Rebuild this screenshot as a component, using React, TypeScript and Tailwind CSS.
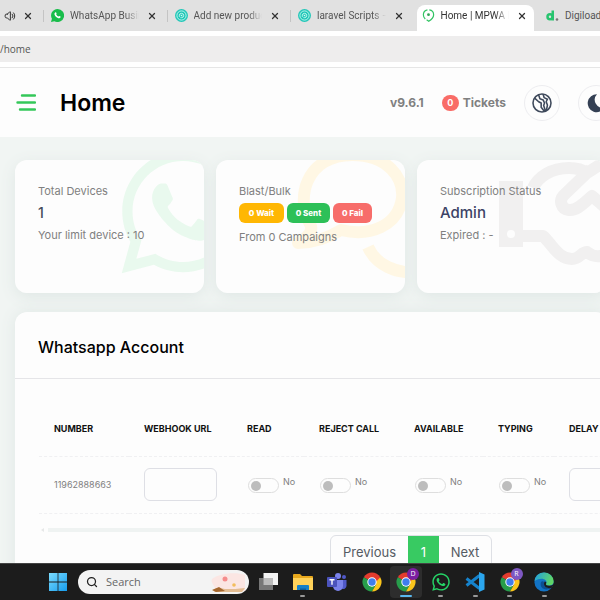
import React from 'react';
import { FaWhatsapp } from 'react-icons/fa';
import { FiSearch, FiX } from 'react-icons/fi';
import { HiOutlineSpeakerWave } from 'react-icons/hi2';

interface BrowserTab {
    title: string;
    icon: React.ReactNode;
    active?: boolean;
}

interface DeviceSwitch {
    id: string;
    label: string;
}

const WhatsappBadge = () => (
    <svg viewBox="0 0 24 24" className="size-[13px] shrink-0">
        <path d="M12 0a12 12 0 0 0-10.3 18L0 24l6.2-1.6A12 12 0 1 0 12 0Z" fill="#19bd4b" />
        <path d="M8.2 6.2c.6-.3 1-.2 1.3.4l.8 1.8c.2.5-.8 1.3-.6 1.7.9 1.7 2.2 2.9 4 3.7.5.2 1.3-1.2 1.8-1l1.9.9c.5.3.5.8.2 1.4-.7 1.5-2.4 2.3-4.2 1.8-3.4-1-5.9-3.5-6.9-6.7-.4-1.5.3-3.2 1.7-4Z" fill="#fff" />
    </svg>
);

const SpiralBadge = () => (
    <svg viewBox="0 0 24 24" className="size-[13px] shrink-0" fill="none">
        <circle cx="12" cy="12" r="12" fill="#22c7b8" />
        <circle cx="12" cy="12" r="8.5" stroke="#d6fbf5" strokeWidth="1.5" />
        <path d="M8 14.5V12a4 4 0 1 1 4 4h-2" stroke="#d6fbf5" strokeWidth="1.6" />
        <circle cx="12" cy="12" r="1.5" fill="#d6fbf5" />
    </svg>
);

const PinBadge = () => (
    <svg viewBox="0 0 24 24" className="size-[13px] shrink-0" fill="none" stroke="#32c463" strokeWidth="2.2">
        <path d="M6 18.5C3.500 16 2.500 13.500 2.500 10.500A9.300 9.300 0 0 1 10 1.500M13.500 1.500a9.300 9.300 0 0 1 8 9c0 5-4 9-9 12l-4-2.500" />
        <circle cx="12" cy="10.5" r="2.6" fill="#32a455" stroke="none" />
    </svg>
);

const DigiBadge = () => (
    <svg viewBox="0 0 26 24" className="size-[13px] shrink-0">
        <circle cx="8" cy="14.5" r="5" fill="none" stroke="#27c46f" strokeWidth="5" />
        <path d="M11 2h5v20h-5z" fill="#27c46f" />
        <circle cx="22" cy="20" r="2.6" fill="#777" />
    </svg>
);

const MenuIcon = () => (
    <svg viewBox="0 0 20 18" className="h-[18px] w-5" stroke="#34c759" strokeWidth="2.4" strokeLinecap="round">
        <path d="M6 1.500H19M1.500 8.500H19M4 15.500h15" />
    </svg>
);

const GlobeIcon = () => (
    <svg viewBox="0 0 24 24" className="size-5" fill="none" stroke="#3f4a5c" strokeWidth="1.9" strokeLinejoin="round" strokeLinecap="round">
        <circle cx="12" cy="12" r="10.8" />
        <path d="M3.500 6.500 8 10.500l3 1.500v5l3.500 4.500M8 2.500l1.500 4.500 4 1.500 1.500 3.500-1 3 2 6M13.500 2l1 3.500 4 2-1.500 3 1.500 4-1 5.500" />
    </svg>
);

const MoonIcon = () => (
    <svg viewBox="0 0 20 20" className="size-5">
        <path d="M11 1.2A9 9 0 1 0 18.600 14.500 8 8 0 0 1 11 1.200Z" fill="#344054" />
    </svg>
);

const BubblesMark = () => (
    <svg viewBox="0 0 140 140" className="size-[140px]" fill="none" stroke="currentColor" strokeWidth="12">
        <path d="M22 64C8 40 16-4 64-5c36 0 52 23 50 43-4 28-32 39-61 32-13 8-29 13-43 13 10-6 16-12 12-19Z" strokeLinejoin="round" />
        <path d="M80 87c8 18 28 27 50 25" />
    </svg>
);

const HandshakeMark = () => (
    <svg viewBox="0 0 130 120" className="h-[120px] w-[130px]" fill="none">
        <path fillRule="evenodd" d="M0 26h24v66H0V26Zm12 49a4 4 0 1 0 0 8 4 4 0 0 0 0-8Z" fill="currentColor" />
        <path
            d="M24 81h20c9 8 15 23 29 23 8 0 9-7 15-7 8 7 20 5 26-4M34 33c5-11 18-20 36-20 8 0 14 2 18 5l11-7h30M92 14 66 39c-7 6-4 15 4 16 8 1 15-7 23-14l37 32"
            stroke="currentColor"
            strokeWidth="12"
            strokeLinejoin="round"
        />
    </svg>
);

const WindowsIcon = () => (
    <svg viewBox="0 0 20 20" className="size-5">
        <defs>
            <linearGradient id="win" x1="0" y1="0" x2="1" y2="1">
                <stop offset="0" stopColor="#7bdcff" />
                <stop offset="1" stopColor="#169ced" />
            </linearGradient>
        </defs>
        <path d="M1 1h8.600v8.600H1zM10.400 1H19v8.600h-8.600zM1 10.400h8.600V19H1zM10.400 10.400H19V19h-8.600z" fill="url(#win)" />
    </svg>
);

const TaskViewIcon = () => (
    <svg viewBox="0 0 20 20" className="size-5">
        <path d="M5.500 1H20v12H5.500z" fill="#f3f3f3" />
        <path d="M1 6h14v12H1z" fill="#777" />
        <path d="M5.500 6H15v7H5.500z" fill="#bbb" />
    </svg>
);

const FolderIcon = () => (
    <svg viewBox="0 0 20 20" className="size-5">
        <path d="M0 3a1 1 0 0 1 1-1h6l2 2h10a1 1 0 0 1 1 1v5H0z" fill="#e9a91d" />
        <path d="M0 6h20v12H0z" fill="#ffd25a" />
        <path d="M4 18v-4a1 1 0 0 1 1-1h10a1 1 0 0 1 1 1v4z" fill="#1580c9" />
        <path d="M7 18v-1.500h6V18z" fill="#0c5d9c" />
    </svg>
);

const TeamsIcon = () => (
    <svg viewBox="0 0 20 20" className="size-5">
        <circle cx="11" cy="4" r="3" fill="#7b83eb" />
        <circle cx="17" cy="5" r="2" fill="#5059c9" />
        <path d="M13 8h6.500v6a3.300 3.300 0 0 1-5 2.500z" fill="#5059c9" />
        <path d="M6 8h10v6a5 5 0 0 1-10 0z" fill="#7b83eb" />
        <rect y="5" width="10" height="10" rx="1" fill="#4b53bc" />
        <path d="M2.500 7.800h5M5 7.800v5" stroke="#fff" strokeWidth="1.4" />
    </svg>
);

const ChromeIcon = () => (
    <svg viewBox="0 0 20 20" className="size-5">
        <path d="M10 10 1.800 5.200a9.500 9.500 0 0 1 16.400 0z" fill="#e33b2e" />
        <path d="M10 10 1.800 5.200A9.500 9.500 0 0 0 10 19.500l4-7z" fill="#279d4b" />
        <path d="m10 10 8.200-4.800A9.500 9.500 0 0 1 10 19.500l4.200-7.200z" fill="#fbc51b" />
        <path d="M10 5.200h8.200L14 10z" fill="#e33b2e" />
        <circle cx="10" cy="10" r="4.7" fill="#fff" />
        <circle cx="10" cy="10" r="3.7" fill="#3f7ded" />
    </svg>
);

const CodeIcon = () => (
    <svg viewBox="0 0 20 20" className="size-5" fill="none">
        <path d="m1.500 6.500 13 10M1.500 13.500l13-10" stroke="#1683cc" strokeWidth="3" />
        <path d="m14 0 5.500 2.500v15L14 20z" fill="#2ba6ee" />
    </svg>
);

const EdgeIcon = () => (
    <svg viewBox="0 0 20 20" className="size-5">
        <defs>
            <linearGradient id="edge" x1="0" y1="0" x2="1" y2="0.3">
                <stop offset="0" stopColor="#1f9ee4" />
                <stop offset="1" stopColor="#5fd669" />
            </linearGradient>
        </defs>
        <circle cx="10" cy="10" r="9.6" fill="#1273c5" />
        <path d="M.5 9A9.600 9.600 0 0 1 19.600 9c.2 4-3 5-6 4.500-2-.3-2-1.500-1.200-2.500C13.500 8 8 4 .5 9Z" fill="url(#edge)" />
        <path d="M7 10c-2 6 4 9.500 10.500 6-4 .5-8-1-7.500-5 .2-2-2-2.500-3-1Z" fill="#0c4f92" />
        <path d="M10.500 9.500c2 0 2 1.500 1.500 2.300-.5 1.200 1 2 3.500 1.900 2 0 3-.5 4-1.700-.5 2-1 3-2 4-4 .8-7.700-1-7.500-4.500z" fill="#1c1c1c" />
    </svg>
);

const tabs: BrowserTab[] = [
    { title: 'WhatsApp Busin', icon: <WhatsappBadge /> },
    { title: 'Add new produc', icon: <SpiralBadge /> },
    { title: 'laravel Scripts – C', icon: <SpiralBadge /> },
    { title: 'Home | MPWA M', icon: <PinBadge />, active: true },
];

const switches: DeviceSwitch[] = [
    { id: 'read', label: 'Read' },
    { id: 'reject', label: 'Reject call' },
    { id: 'available', label: 'Available' },
    { id: 'typing', label: 'Typing' },
];

const taskbarApps = [
    { name: 'Task view', icon: <TaskViewIcon /> },
    { name: 'Files', icon: <FolderIcon />, open: true },
    { name: 'Teams', icon: <TeamsIcon /> },
    { name: 'Chrome', icon: <ChromeIcon /> },
    { name: 'Chrome D', icon: <ChromeIcon />, badge: 'D', active: true },
    { name: 'WhatsApp', icon: <FaWhatsapp className="size-5 text-[#25d366]" />, open: true },
    { name: 'Code', icon: <CodeIcon />, open: true },
    { name: 'Chrome R', icon: <ChromeIcon />, badge: 'R', open: true },
    { name: 'Edge', icon: <EdgeIcon />, open: true },
];

const BrowserBar = () => (
    <div className="shrink-0 font-[Roboto,sans-serif] text-[10px] text-[#555]">
        <div className="flex h-[31px] bg-[#e1e1e1]">
            <div className="flex w-[43px] shrink-0 items-center gap-[7px] pl-1">
                <HiOutlineSpeakerWave className="size-3 text-[#333]" strokeWidth={2} />
                <button aria-label="Close tab"><FiX className="size-[10px] text-[#333]" strokeWidth={3} /></button>
            </div>
            {tabs.map((tab) => (
                <div key={tab.title} className={`relative flex min-w-0 flex-1 items-center pl-2 ${tab.active ? 'text-[#333]' : ''}`}>
                    {tab.active
                        ? <div className="absolute inset-x-[3px] top-[5px] bottom-0 rounded-t-lg bg-white" />
                        : <div className="absolute left-0 h-3 w-px bg-[#c4c4c4]" />}
                    <div className="relative flex min-w-0 flex-1 items-center pr-[10px]">
                        {tab.icon}
                        <span className="ml-[6px] min-w-0 flex-1 whitespace-nowrap mask-r-from-80%">{tab.title}</span>
                        <button aria-label={`Close ${tab.title}`} className="ml-2"><FiX className="size-[10px] text-[#333]" strokeWidth={3} /></button>
                    </div>
                </div>
            ))}
            <div className="flex w-[63px] shrink-0 items-center gap-[6px] pl-[9px] whitespace-nowrap">
                <DigiBadge />
                <span>Digiload</span>
            </div>
        </div>
        <div className="border-b border-[#e6e6e6] bg-white pt-[5px] pb-[5px]">
            <div className="h-[26px] bg-[#eeeded] font-['Open_Sans',sans-serif] text-[10px] leading-[26px] text-[#555]">/home</div>
        </div>
    </div>
);

const PageHeader = () => (
    <header className="flex h-[69px] shrink-0 items-center bg-[#fdfdfd] pl-4">
        <button aria-label="Toggle menu"><MenuIcon /></button>
        <h1 className="ml-6 text-[23px] leading-8 font-semibold text-black">Home</h1>
        <div className="-mr-[14px] ml-auto flex items-center text-xs font-bold text-[#808080]">
            <span>v9.6.1</span>
            <a href="#tickets" className="ml-[18px] flex items-center gap-1">
                <span className="flex h-4 w-[17px] items-center justify-center rounded-full bg-[#f96c67] text-[9px] text-white">0</span>
                Tickets
            </a>
            <button aria-label="Language" className="ml-[18px] flex size-9 items-center justify-center rounded-full border border-[#ededf0]"><GlobeIcon /></button>
            <button aria-label="Dark mode" className="ml-[18px] flex size-9 items-center justify-center rounded-full border border-[#ededf0]"><MoonIcon /></button>
        </div>
    </header>
);

const StatCard: React.FC<{ title: string; mark: React.ReactNode; children: React.ReactNode }> = ({ title, mark, children }) => (
    <div className="rounded-xl shadow-[0_4px_16px_#dfe7e5]">
        <section className="relative h-[133px] overflow-hidden rounded-xl bg-[#fdfdfd] pt-[23px] pl-[23px] text-[11px] leading-4 whitespace-nowrap text-[#808080]">
            {mark}
            <div className="relative">
                <h2>{title}</h2>
                {children}
            </div>
        </section>
    </div>
);

const Stats = () => (
    <div className="-mr-[6px] grid grid-cols-3 gap-3 pl-[15px]">
        <StatCard title="Total Devices" mark={<FaWhatsapp className="absolute -top-[18px] left-[98px] size-[140px] text-[#e9f9ee]" />}>
            <p className="mt-1 text-sm leading-5 font-medium text-[#444b5a]">1</p>
            <p className="mt-1">Your limit device : 10</p>
        </StatCard>
        <StatCard title="Blast/Bulk" mark={<div className="absolute top-0 left-[72px] text-[#fff7e4]"><BubblesMark /></div>}>
            <p className="mt-1 flex gap-[3px] text-[8px] leading-5 font-extrabold text-white">
                <span className="w-[45px] rounded-md bg-[#ffb703] text-center">0 Wait</span>
                <span className="w-[43px] rounded-md bg-[#2dc058] text-center">0 Sent</span>
                <span className="w-[39px] rounded-md bg-[#f76d6a] text-center">0 Fail</span>
            </p>
            <p className="mt-[6px]">From 0 Campaigns</p>
        </StatCard>
        <StatCard title="Subscription Status" mark={<div className="absolute -top-[5px] left-[82px] text-[#f1f0f0]"><HandshakeMark /></div>}>
            <p className="mt-1 text-[15px] leading-5 font-medium text-[#3c4366]">Admin</p>
            <p className="mt-1">Expired : -</p>
        </StatCard>
    </div>
);

const AccountTable = () => (
    <section className="mt-[19px] -mr-2 ml-[15px] shrink-0 rounded-xl bg-[#fdfdfd] pb-6 shadow-[0_0_16px_#dfe7e5]">
        <h2 className="border-b border-[#e5e5e8] px-[23px] pt-1 text-base leading-[62px] font-medium text-black">Whatsapp Account</h2>
        <div className="ml-6 overflow-hidden pt-[22px]">
            <table className="w-[640px] table-fixed text-left">
                <colgroup>
                    <col className="w-[90px]" />
                    <col className="w-[103px]" />
                    <col className="w-[72px]" />
                    <col className="w-[95px]" />
                    <col className="w-[84px]" />
                    <col className="w-[71px]" />
                    <col />
                </colgroup>
                <thead>
                    <tr className="h-[55px] border-b border-dashed border-[#f0f0f2] text-[9px] whitespace-nowrap text-[#111] uppercase">
                        <th className="px-[15px] font-bold">Number</th>
                        <th className="px-[15px] font-bold">Webhook URL</th>
                        <th className="px-[15px] font-bold">Read</th>
                        <th className="px-[15px] font-bold">Reject call</th>
                        <th className="px-[15px] font-bold">Available</th>
                        <th className="px-[15px] font-bold">Typing</th>
                        <th className="px-[15px] font-bold">Delay</th>
                    </tr>
                </thead>
                <tbody>
                    <tr className="h-[57px] border-b border-dashed border-[#f0f0f2] text-[9px] text-[#808080]">
                        <td className="px-[15px]">11962888663</td>
                        <td className="px-[15px]">
                            <input type="text" aria-label="Webhook URL" className="block h-[33px] w-full rounded-md border border-[#dedfe5] px-2" />
                        </td>
                        {switches.map((s) => (
                            <td key={s.id} className="pl-4">
                                <div className="flex gap-1">
                                    <input
                                        id={s.id}
                                        type="checkbox"
                                        aria-label={s.label}
                                        className="mt-[2px] flex h-[15px] w-[31px] shrink-0 appearance-none items-center rounded-full border border-[#dedede] before:ml-[2px] before:size-[10px] before:rounded-full before:bg-[#bdbdbd] checked:before:ml-4"
                                    />
                                    <label htmlFor={s.id} className="leading-3">No</label>
                                </div>
                            </td>
                        ))}
                        <td className="px-[15px]">
                            <input type="text" aria-label="Delay" className="block h-[33px] w-full rounded-md border border-[#dedfe5] px-2" />
                        </td>
                    </tr>
                </tbody>
            </table>
            <div className="mt-[14px] flex h-[5px] items-center gap-1 pl-[2px]">
                <span className="border-y-2 border-r-[3px] border-y-transparent border-r-[#e6e8e8]" />
                <span className="h-1 flex-1 bg-[#eff3f2]" />
            </div>
        </div>
        <nav aria-label="Pages" className="mt-[2px] flex justify-end pr-[116px] text-[13px] leading-8 text-[#555b63]">
            <div className="flex overflow-hidden rounded-md border border-[#dee0e5]">
                <a href="#prev" className="w-[77px] text-center">Previous</a>
                <a href="#page-1" className="w-[31px] bg-[#38ca62] text-center text-white">1</a>
                <a href="#next" className="w-[52px] text-center">Next</a>
            </div>
        </nav>
    </section>
);

const Taskbar = () => (
    <footer className="flex h-[37px] shrink-0 items-center border-t border-[#444] bg-[#1c1c1c] pl-12 font-['Open_Sans',sans-serif]">
        <button aria-label="Start"><WindowsIcon /></button>
        <label className="relative ml-[10px] flex h-6 w-[171px] items-center overflow-hidden rounded-full bg-[#f3f3f3] pl-2">
            <FiSearch className="size-3 shrink-0 text-[#222]" strokeWidth={2.5} />
            <input type="search" aria-label="Search" placeholder="Search" className="ml-2 w-24 text-[11px] outline-none placeholder:text-[#666]" />
            <svg viewBox="0 0 40 24" className="absolute right-0 h-6 w-10">
                <path d="M3 9C8 4 26 1 36 5v16H6c1-5-5-8-3-12Z" fill="#fbe6e3" />
                <path d="M4 20c5-4 9-1 14-1s11 0 18-1l-3 4H6Z" fill="#e3bd93" />
                <path d="m3 20 7-3 6 4-9 1Z" fill="#a5672f" />
                <circle cx="16" cy="9" r="2.5" fill="#f58c8c" />
                <circle cx="25" cy="15" r="1.8" fill="#f3bd5c" />
            </svg>
        </label>
        <div className="mr-[46px] ml-[9px] flex flex-1 justify-between">
            {taskbarApps.map((app) => (
                <button key={app.name} aria-label={app.name} className="relative flex size-5 items-center justify-center">
                    {app.active && <span className="absolute -inset-x-[6px] -inset-y-[6px] rounded bg-[#2d2d2d]" />}
                    <span className="relative">{app.icon}</span>
                    {app.badge && (
                        <span className={`absolute -top-1 -right-[3px] flex size-3 items-center justify-center rounded-full text-[7px] text-white ${app.badge === 'D' ? 'bg-[#7b1fa2]' : 'bg-[#7e57c2]'}`}>
                            {app.badge}
                        </span>
                    )}
                    {app.active && <span className="absolute -bottom-[5px] h-[2px] w-3 rounded-full bg-[#5ab8ee]" />}
                    {app.open && <span className="absolute -bottom-[5px] h-[2px] w-[5px] rounded-full bg-[#999]" />}
                </button>
            ))}
        </div>
    </footer>
);

const App: React.FC = () => {
    return (
        <div className="flex h-screen flex-col overflow-hidden bg-[#f1f5f3] font-['Inter',sans-serif]">
            <BrowserBar />
            <PageHeader />
            <main className="min-h-0 flex-1 overflow-hidden pt-[23px]">
                <Stats />
                <AccountTable />
            </main>
            <Taskbar />
        </div>
    );
};

export default App;
